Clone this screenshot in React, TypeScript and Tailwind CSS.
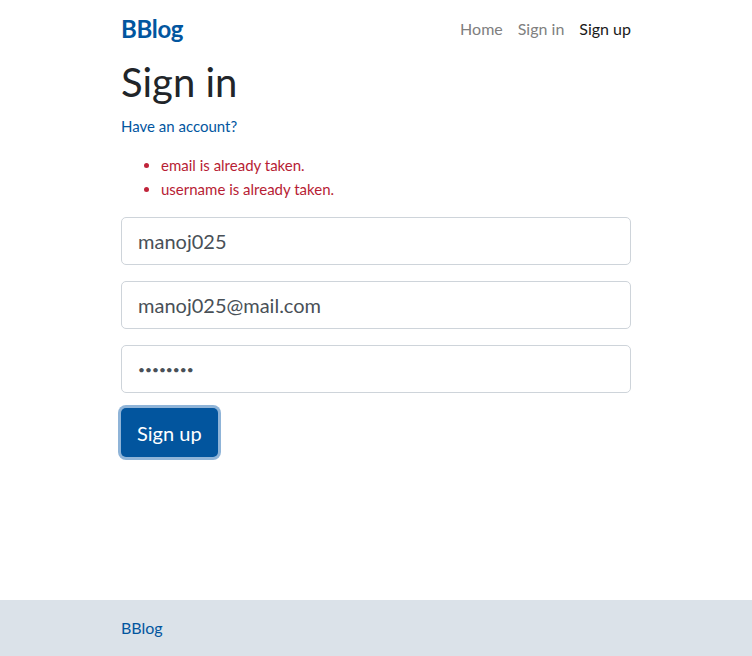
import React, { useState } from 'react';

const font = { fontFamily: 'Lato, "Open Sans", "Liberation Sans", sans-serif' };

export default function App() {
    const [username, setUsername] = useState('manoj025');
    const [email, setEmail] = useState('manoj025@mail.com');
    const [password, setPassword] = useState('manoj025');
    const errors = ['email is already taken.', 'username is already taken.'];

    return (
        <div className="min-h-[656px] flex flex-col bg-white text-[#212529]" style={font}>
            <nav className="w-[510px] mx-auto h-[57px] flex items-center justify-between">
                <a href="#" className="text-[24px] font-bold text-[#02569f] leading-none tracking-[-0.3px]">BBlog</a>
                <ul className="flex items-center gap-[15px] text-[16px] leading-none">
                    <li><a href="#" className="text-[#808080]">Home</a></li>
                    <li><a href="#" className="text-[#808080]">Sign in</a></li>
                    <li><a href="#" className="text-[#1a1a1a]">Sign up</a></li>
                </ul>
            </nav>

            <main className="w-[510px] mx-auto flex-grow">
                <h1 className="text-[40px] leading-[48px] mt-[1px] font-normal">Sign in</h1>
                <a href="#" className="block mt-[8px] text-[15px] leading-[24px] text-[#02569f]">Have an account?</a>

                <ul className="mt-[15px] pl-[40px] list-disc text-[15px] leading-[24px] text-[#b71d34] marker:text-[#c0243a]">
                    {errors.map((err, i) => (
                        <li key={i}>{err}</li>
                    ))}
                </ul>

                <form className="mt-[16px] flex flex-col gap-[16px]" onSubmit={e => e.preventDefault()}>
                    <input
                        type="text"
                        value={username}
                        onChange={e => setUsername(e.target.value)}
                        className="h-[48px] w-full px-[16px] text-[20px] text-[#495057] border border-[#ced4da] rounded-[5px] outline-none"
                    />
                    <input
                        type="email"
                        value={email}
                        onChange={e => setEmail(e.target.value)}
                        className="h-[48px] w-full px-[16px] text-[20px] text-[#495057] border border-[#ced4da] rounded-[5px] outline-none"
                    />
                    <input
                        type="password"
                        value={password}
                        onChange={e => setPassword(e.target.value)}
                        className="h-[48px] w-full px-[16px] text-[12px] text-[#495057] border border-[#ced4da] rounded-[5px] outline-none"
                    />
                    <div className="-mt-[1px]">
                        <button
                            type="submit"
                            className="h-[49px] px-[16px] text-[20px] text-white bg-[#02559e] rounded-[5px] ring-[3px] ring-[#8fb4d8]"
                        >
                            Sign up
                        </button>
                    </div>
                </form>
            </main>

            <footer className="h-[56px] bg-[#dbe2e9] flex items-center">
                <div className="w-[510px] mx-auto">
                    <a href="#" className="text-[16px] text-[#02569f]">BBlog</a>
                </div>
            </footer>
        </div>
    );
}
